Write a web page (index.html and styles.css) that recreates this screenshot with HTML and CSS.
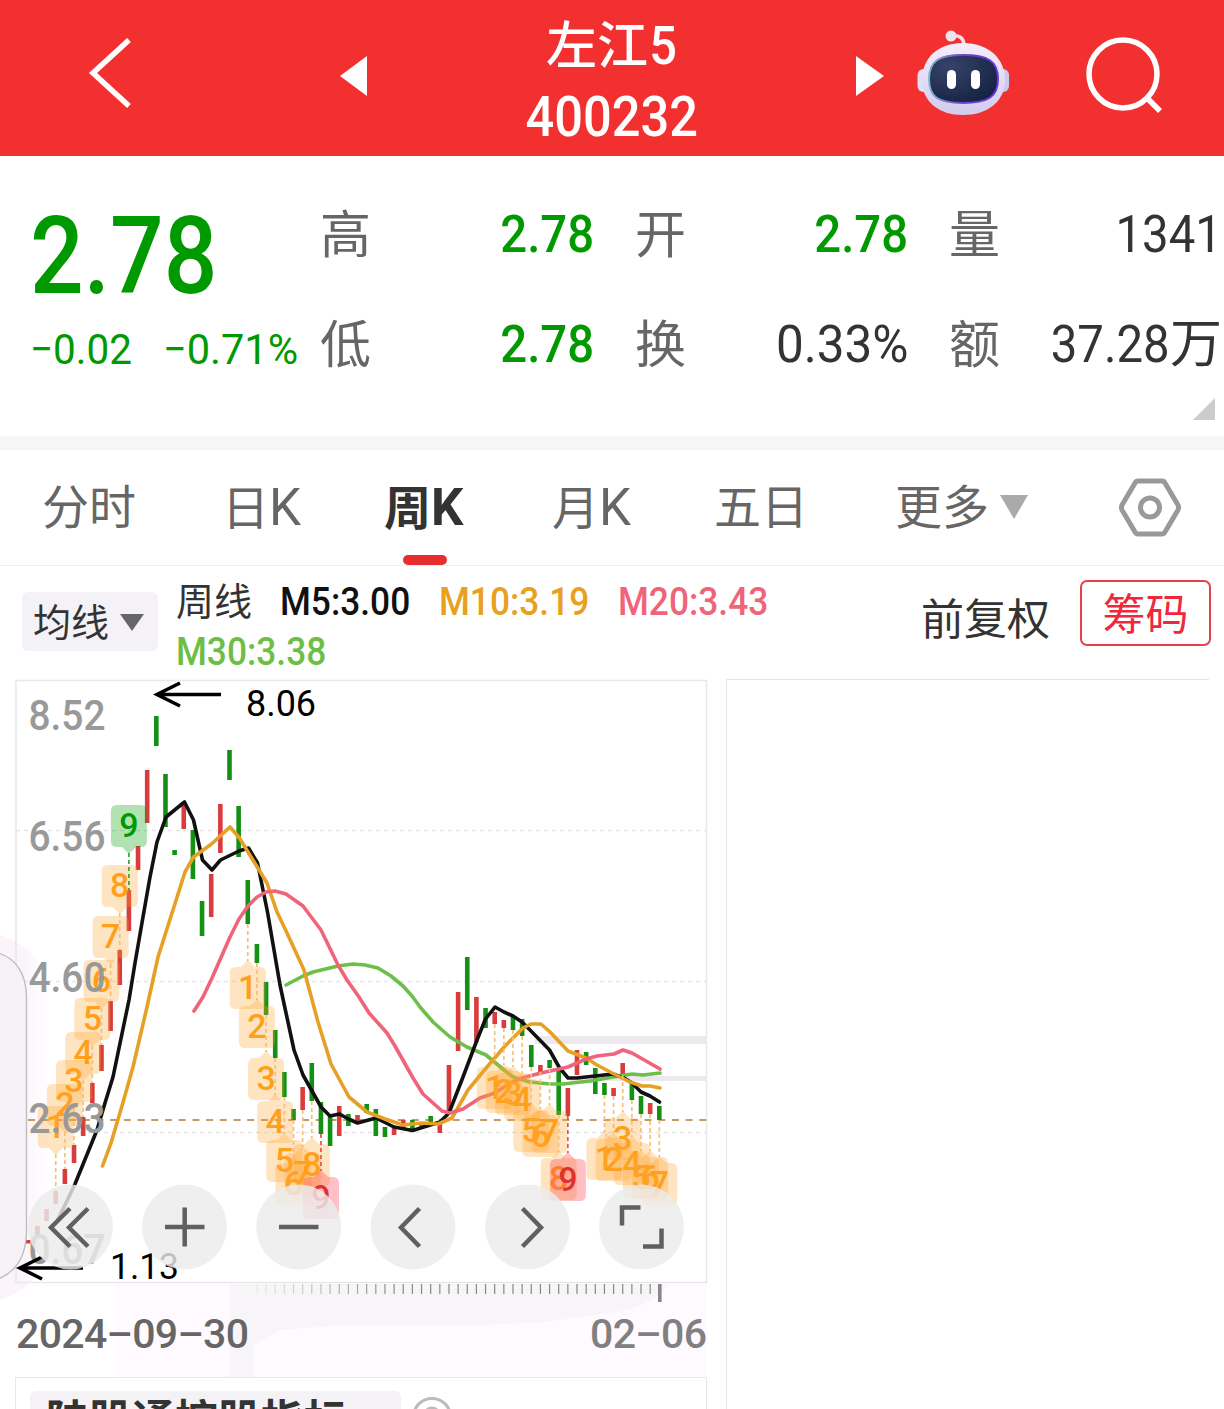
FILE: index.html
```html
<!DOCTYPE html>
<html lang="zh-CN">
<head>
	<meta charset="UTF-8">
	<meta name="viewport" content="width=device-width" />
	<title>左江5 400232</title>
	<link rel="stylesheet" href="styles.css">
	<script src="chart.js"></script>
</head>
<body>

<div class="header">
	<svg class="back" width="60" height="90" viewBox="80 28 60 90"><path d="M129 40 L93 73 L129 106" /></svg>
	<svg class="prev" width="28" height="42" viewBox="0 0 28 42"><path d="M0 21 L27 1 V41 Z" /></svg>
	<div class="title">
		<p class="name">左江<span>5</span></p>
		<p class="code"><span>400232</span></p>
	</div>
	<svg class="next" width="28" height="42" viewBox="0 0 28 42"><path d="M28 21 L0 1 V41 Z" /></svg>
	<svg class="robot" width="96" height="90" viewBox="915 28 96 90">
		<defs>
			<linearGradient id="head" x1="0" y1="0" x2="0" y2="1"><stop offset="0" stop-color="#f4eefb" /><stop offset="1" stop-color="#d3cbee" /></linearGradient>
			<linearGradient id="rim" x1="0" y1="0" x2="1" y2="0"><stop offset="0" stop-color="#7fb5cf" /><stop offset="0.5" stop-color="#6c43c4" /><stop offset="1" stop-color="#6a35e0" /></linearGradient>
			<radialGradient id="face" cx="0.3" cy="0.25" r="0.8"><stop offset="0" stop-color="#36446a" /><stop offset="1" stop-color="#172344" /></radialGradient>
		</defs>
		<path d="M951 36 Q964 34 964 46" fill="none" stroke="#e9dff3" stroke-width="3.500" />
		<circle cx="951" cy="36" r="5.500" fill="#f0e3ee" />
		<rect x="917.500" y="69" width="14" height="23" rx="6" fill="#e3def5" />
		<rect x="995" y="69" width="14" height="23" rx="6" fill="#cfc8ee" />
		<path d="M963 43 C988 43 1005 58 1005 80 C1005 102 987 115 963 115 C939 115 922 102 922 80 C922 58 938 43 963 43 Z" fill="url(#head)" />
		<path d="M963 55 C988 55 998 61 998 79 C998 97 988 103 963 103 C938 103 929 97 929 79 C929 61 939 55 963 55 Z" fill="url(#face)" stroke="url(#rim)" stroke-width="2" />
		<rect x="947" y="70" width="9" height="19" rx="4.500" fill="#fff" />
		<rect x="971" y="70" width="9" height="19" rx="4.500" fill="#fff" />
	</svg>
	<svg class="search" width="80" height="80" viewBox="1084 36 80 80"><circle cx="1123" cy="74" r="34" /><path d="M1147 98 L1160 111" /></svg>
</div>

<div class="quote">
	<div class="price">
		<p class="now"><span>2.78</span></p>
		<p class="change"><span>−0.02</span><span>−0.71%</span></p>
	</div>
	<dl><dt>高</dt><dd class="down"><span>2.78</span></dd></dl>
	<dl><dt>开</dt><dd class="down"><span>2.78</span></dd></dl>
	<dl><dt>量</dt><dd><span>1341</span></dd></dl>
	<dl><dt>低</dt><dd class="down"><span>2.78</span></dd></dl>
	<dl><dt>换</dt><dd><span class="rate">0.33%</span></dd></dl>
	<dl><dt>额</dt><dd><span>37.28</span>万</dd></dl>
	<i class="corner"></i>
</div>

<ul class="tabs">
	<li>分时</li>
	<li>日<em>K</em></li>
	<li class="on">周<em>K</em></li>
	<li>月<em>K</em></li>
	<li>五日</li>
	<li>更多<i class="arrow"></i></li>
	<li class="set"><svg width="64" height="60" viewBox="0 0 64 60"><path d="M20 3 H44 Q46 3 47 5 L60 27 Q61 29.500 60 32 L47 54 Q46 56 44 56 H20 Q18 56 17 54 L4 32 Q3 29.500 4 27 L17 5 Q18 3 20 3 Z" /><circle cx="32" cy="29.500" r="9.500" /></svg></li>
</ul>

<div class="legend">
	<div class="pick">均线<i class="arrow"></i></div>
	<div class="ma">
		<b>周线</b><span class="m5">M5:3.00</span><span class="m10">M10:3.19</span><span class="m20">M20:3.43</span><span class="m30">M30:3.38</span>
	</div>
	<div class="right">前复权</div>
	<div class="chip">筹码</div>
</div>

<div class="main">
	<div class="left">
		<svg id="chart" width="724" height="704" viewBox="0 673 724 704">
			<defs>
				<linearGradient id="fade" gradientUnits="userSpaceOnUse" x1="240" y1="0" x2="400" y2="0"><stop offset="0" stop-color="#888" stop-opacity="0" /><stop offset="1" stop-color="#888" /></linearGradient>
				<linearGradient id="glow" x1="0" y1="0" x2="1" y2="0"><stop offset="0.5" stop-color="#fbf5fb" /><stop offset="1" stop-color="#fffdff" /></linearGradient>
			</defs>
			<path d="M0 935 Q48 950 48 1000 V1240 Q46 1285 0 1300 Z" fill="url(#glow)" />
			<rect x="116" y="1284" width="591" height="93" fill="#fefaff" />
			<path d="M230 1284 H668 Q650 1310 600 1314 L545 1322 L480 1325 H345 L280 1330 L254 1345 V1377 H230 Z" fill="#f7f5f8" />
			<rect class="frame" x="16" y="680.500" width="690.500" height="602" />
			<path class="grid" d="M16 830.500 H706 M16 981.500 H706 M16 1132.500 H706" />
			<path d="M535 1036 H707 V1044 H535 Z M570 1076 H707 V1081 H570 Z" fill="#ede8ed" />
			<path class="last" d="M28 1120 H707" />
			<g id="candles"></g>
			<polyline class="l30" points="286,985 303,976 313,972 338,966 353,964 365,965 378,968 391,976 403,986 412,996 420,1007 433,1022 450,1037 467,1047 486,1055 504,1070 513,1077 530,1082 550,1084 563,1084 590,1081 613,1077 632,1074 643,1075 660,1073" />
			<polyline class="l5" points="58,1219 66,1203 75,1184 97,1130 105,1103 113,1077 129,1000 135,963 143,917 150,877 157,842 166,817 184.500,802 193.500,820 202.500,860 212,870 220.500,860 239,851 248.500,848 257.500,863 267.500,912 280,985 294,1050 303,1075 312,1091 321,1107 330,1116 339.500,1114 348.500,1119 357.500,1123 376,1118 394,1127 412.500,1130.500 440,1122 449,1113 463,1077 477,1040 485.500,1019 495,1007 504,1012 513,1016 522,1022 531,1031 549.500,1050 559,1067 568,1078 577,1078 613,1074 624,1078 632,1083 641,1092 650,1096 659.500,1102" />
			<polyline class="l10" points="102.500,1166 111,1143 122,1106 133,1067 147,1007 158,957 173,910 185,872 193.500,857 211.500,844 230,827 239.500,838 248,852 267,883 277,912 287,933 304,970 318,1022 331,1064 349,1097 367,1112 385,1119 403,1125 422,1123 438,1124 452,1118 468,1090 487,1067 505,1046 523,1028 531,1024 541,1024 550,1032 568,1051 586,1058 597,1065 614,1074 630,1082 642,1086 650,1086 660,1088" />
			<polyline class="l20" points="194,1011 203,997 212,978 230,937 239,919 248,906 257,897 266,892 275,891 286,894 303,906 321,930 338,965 347,980 359,997 369,1013 387,1033 395,1046 413,1078 423,1094 442,1111 450,1113 463,1109 480,1098 495,1093 510,1083 522,1078 541,1073 568,1067 586,1059 597,1056 614,1054 623,1050 632,1053 660,1069" />
			<g id="marks"></g>
			<g class="axis">
				<text x="28.500" y="730" textLength="77" lengthAdjust="spacingAndGlyphs">8.52</text>
				<text x="28.500" y="851" textLength="77" lengthAdjust="spacingAndGlyphs">6.56</text>
				<text x="28.500" y="992" textLength="77" lengthAdjust="spacingAndGlyphs">4.60</text>
				<text x="28.500" y="1133" textLength="77" lengthAdjust="spacingAndGlyphs">2.63</text>
				<text x="28.500" y="1264" textLength="77" lengthAdjust="spacingAndGlyphs">0.67</text>
			</g>
			<path class="point" d="M221 694.500 H157 M180 683 L157 694.500 L180 706 M83 1268 H20 M42 1257 L20 1268 L42 1279" />
			<text class="peak" x="246" y="716" textLength="70" lengthAdjust="spacingAndGlyphs">8.06</text>
			<text class="peak" x="110" y="1279" textLength="69" lengthAdjust="spacingAndGlyphs">1.13</text>
			<path class="drawer" d="M-2 953 C16 958 26 974 26.500 996 V1232 C26 1256 16 1272 -2 1279 Z" />
			<g class="btn">
				<circle cx="70.500" cy="1227" r="42.500" /><circle cx="184.500" cy="1227" r="42.500" /><circle cx="298.700" cy="1227" r="42.500" />
				<circle cx="413" cy="1227" r="42.500" /><circle cx="527.500" cy="1227" r="42.500" /><circle cx="641.500" cy="1227" r="42.500" />
			</g>
			<path class="ico" d="M70 1208.500 L51 1227.500 L70 1246.500 M88 1208.500 L69 1227.500 L88 1246.500 M165 1227 H204.500 M184.700 1207.500 V1246.500 M279 1227 H318.500 M419.500 1208.500 L401 1227.500 L419.500 1246.500 M522.500 1208.500 L541 1227.500 L522.500 1246.500 M622 1225.500 V1207.500 H640.500 M643 1246.500 H661.500 V1228.500" />
			<g id="ticks"></g>
			<text class="date" x="16" y="1348" textLength="233">2024–09–30</text>
			<text class="date end" x="590" y="1348" textLength="117">02–06</text>
		</svg>
		<div class="panel">
			<div class="tag">陆股通控股指标</div>
			<svg width="40" height="40" viewBox="0 0 40 40"><circle cx="20" cy="20" r="18.500" /><path d="M14 17 Q14 11 20 11 Q26 11 26 17 Q26 20 20 23" /></svg>
		</div>
	</div>
	<div class="chips"></div>
</div>

</body>
</html>
```
FILE: chart.js
```js
window.onload = function(){

	var oCandles = document.getElementById('candles');
	var oMarks = document.getElementById('marks');
	var oTicks = document.getElementById('ticks');

	// top, bottom, 1 = up
	var data = [
		[1240,1243.5,1],[1226,1235,1],[1209,1221,1],[1191,1204,1],[1169,1184,1],[1145,1163,1],[1117,1136,1],
		[1083,1103,1],[1045,1071,1],[1001,1031,1],[950,985,1],[890,931,1],[846,870,1],[770,823,1],
		[716,746,0],[774,827,0],[850,855,0],[803,829,1],[830,879,0],[901,936,0],[874,917,1],
		[804,853,1],[750,780,0],[806,857,0],[880,924,0],[944,963,0],[982,1015,0],[1030,1058,0],
		[1072,1097,0],[1109,1120,0],[1087,1110,1],[1063,1101,0],[1102,1134,0],[1115,1146,0],[1106,1136,1],
		[1114,1126,0],[1115,1123,1],[1104,1113,0],[1109,1136,0],[1127,1137,0],[1127,1135,1],[1120,1130,1],
		[1120,1132,0],[1123,1127,1],[1116,1123,0],[1124,1133,1],[1065,1113,1],[992,1051,1],[957,1010,0],
		[997,1042,1],[1008,1028,0],[1012,1024,1],[1020,1028,1],[1017,1030,0],[1019,1036,0],[1045,1067,0],
		[1065,1072,1],[1060,1068,0],[1068,1115,0],[1088,1116,1],[1050,1075,1],[1052,1065,0],[1068,1094,0],
		[1083,1095,0],[1088,1096,1],[1063,1075,1],[1084,1100,0],[1096,1114,0],[1103,1114,1],[1106,1120,0]
	];

	function getX(i){
		return 28.3 + i*9.145;
	}

	function add(parent,name,attr,text){
		var el = document.createElementNS('http://www.w3.org/2000/svg',name);
		for(var k in attr){
			el.setAttribute(k,attr[k]);
		}
		if(text){
			el.textContent = text;
		}
		parent.appendChild(el);
	}

	for(var i=0;i<data.length;i++){
		add(oCandles,'rect',{'class':data[i][2] ? 'up' : 'dn', x:getX(i)-2.3, y:data[i][0], width:4.6, height:data[i][1]-data[i][0]});
	}

	// count marks above (dir -1) or below (dir 1) the candles
	function mark(start,count,dir){
		for(var n=1;n<=count;n++){
			var i = start + n - 1;
			var x = getX(i);
			var top = dir<0 ? data[i][0]-85 : data[i][1]+43;
			var from = dir<0 ? top+48 : data[i][1];
			var to = dir<0 ? data[i][0] : top-6;
			var c = n==9 ? (dir<0 ? 'mark low' : 'mark high') : 'mark';
			var box = 'M'+(x-12)+' '+top;
			if(dir>0){
				box += 'H'+(x-7)+'L'+x+' '+(top-7)+'L'+(x+7)+' '+top;
			}
			box += 'H'+(x+12)+'q6 0 6 6v30q0 6 -6 6';
			if(dir<0){
				box += 'H'+(x+7)+'L'+x+' '+(top+49)+'L'+(x-7)+' '+(top+42);
			}
			box += 'H'+(x-12)+'q-6 0 -6 -6v-30q0 -6 6 -6Z';
			add(oMarks,'path',{'class':c+' stem', d:'M'+x+' '+from+'V'+to});
			add(oMarks,'path',{'class':c+' box', d:box});
			add(oMarks,'text',{'class':c, x:x, y:top+31.5}, String(n));
		}
	}
	mark(3,9,-1);
	mark(24,9,1);
	mark(51,9,1);
	mark(63,7,1);

	for(var i=25;i<69;i++){
		add(oTicks,'rect',{x:getX(i)-0.6, y:1284, width:1.2, height:10, fill:'url(#fade)'});
	}
	add(oTicks,'rect',{x:658, y:1284, width:3.6, height:18, fill:'#888'});

}
```
FILE: styles.css
```css
*{padding:0; margin:0; box-sizing:border-box;}
body{width:1224px; height:1409px; overflow:hidden; background:#fff; color:#333; font-family:Roboto,"Noto Sans CJK SC",sans-serif;}
ul{list-style:none;}
i{display:inline-block;}
em{font-style:normal; font-size:51px;}
svg{display:block; flex:none;}

.header{display:flex; height:156px; padding-left:80px; background:#f23030; color:#fff;}
.header svg{fill:#fff;}
.header .back{margin-top:28px; fill:none; stroke:#fff; stroke-width:5.5;}
.header .prev{margin:55px 0 0 200px;}
.title{width:488px; text-align:center; font-weight:500;}
.title .name{padding-top:10px; font-size:51px; line-height:72px; height:81px;}
.title .name span{display:inline-block; font-size:53px; transform:scaleX(.92);}
.title .code{font-size:55px; line-height:72px;}
.title .code span{display:inline-block; transform:scaleX(.92);}
.header .next{margin-top:55px;}
.header .robot{margin:28px 0 0 31px;}
.header .search{margin:36px 0 0 73px; fill:none; stroke:#fff; stroke-width:5.5;}

.quote{position:relative; display:grid; grid-template-columns:320px 274px 314px 314px; grid-template-rows:110px 110px; height:294px; padding-top:24px; border-bottom:14px solid #f6f6f6;}
.price{grid-row:1 / 3; padding-left:30px; color:#090;}
.price .now{font-size:108px; font-weight:500; line-height:108px; padding-top:22px; white-space:nowrap;}
.price .now span{display:inline-block; transform:scaleX(.875); transform-origin:0 50%;}
.price .change{display:flex; margin-top:14px; font-size:43px; line-height:50px;}
.price .change span{width:133px; white-space:nowrap; transform:scaleX(.94); transform-origin:0 50%;}
.price .change span:last-child{transform:scaleX(.965);}
.quote dl{display:flex; justify-content:space-between; height:110px; line-height:110px; font-size:51px; white-space:nowrap;}
.quote dl:nth-of-type(3n+2),.quote dl:nth-of-type(3n){padding-left:41px;}
.quote dt{color:#666; padding-top:1px;}
.quote dd{font-size:52px;}
.quote dd span{display:inline-block; transform:scaleX(.91); transform-origin:100% 50%;}
.quote dd .rate{transform:scaleX(.95);}
.quote .down{color:#090; font-weight:500;}
.corner{position:absolute; right:9px; bottom:16px; border-left:22px solid transparent; border-bottom:22px solid #ccc;}

.tabs{display:flex; position:relative; height:116px; border-bottom:1px solid #eee; line-height:116px; font-size:47px; color:#666; white-space:nowrap;}
.tabs li{position:relative; flex:none; width:164px; height:115px;}
.tabs li:first-child{width:182px; padding-left:42px;}
.tabs li:nth-child(2){padding-left:40px;}
.tabs li:nth-child(3){padding-left:38px;}
.tabs li:nth-child(4){padding-left:42px;}
.tabs li:nth-child(5){width:180px; padding-left:40px;}
.tabs li:nth-child(6){width:222px; padding-left:41px;}
.tabs .on{color:#333; font-weight:700;}
.tabs .on:after{content:""; position:absolute; left:57px; bottom:0; width:44px; height:10px; border-radius:5px; background:#e62e2e;}
.arrow{border:14px solid transparent; border-top:24px solid #aaa; border-bottom:0; margin-left:11px; vertical-align:5px;}
.tabs .set{width:148px; padding:28px 0 0 42px;}
.tabs svg{fill:none; stroke:#999; stroke-width:5;}

.legend{display:flex; height:107px; white-space:nowrap;}
.pick{width:136px; height:59px; margin:26px 0 0 22px; padding-left:11px; border-radius:6px; background:#f5f2f7; font-size:38px; line-height:62px;}
.pick .arrow{border-width:17px 12px 0; border-top-color:#666; margin-left:11px; vertical-align:5px;}
.ma{width:680px; height:100px; margin:11px 0 0 18px; font-size:39px; line-height:50px; display:flex; flex-wrap:wrap; align-content:flex-start;}
.ma b{width:104px; font-size:38px; font-weight:400;}
.ma span{font-weight:500; transform:scaleX(.905); transform-origin:0 50%;}
.ma .m5{width:159px; color:#111;}
.ma .m10{width:179px; color:#e8a020;}
.ma .m20{width:200px; color:#f0647a;}
.ma .m30{color:#6cbf44;}
.legend .right{width:159px; margin:24px 0 0 65px; font-size:43px; line-height:60px;}
.chip{width:131px; height:66px; margin-top:14px; border:2px solid #e6404c; border-radius:7px; color:#f0283c; text-align:center; font-size:43px; line-height:66px;}

.main{display:flex; height:736px;}
.left{width:726px;}
.chips{width:483px; height:730px; margin-top:6px; border-top:1px solid #e5e5e5; border-left:1px solid #e5e5e5;}
.frame{fill:none; stroke:#e8e8e8; stroke-width:1.5;}
.grid{fill:none; stroke:#e6e6e6; stroke-width:1.3; stroke-dasharray:4 4;}
.last{stroke:#c39a68; stroke-width:2; stroke-dasharray:7 6.7;}
.up{fill:#d93c3c;}
.dn{fill:#149114;}
polyline{fill:none; stroke-width:3.6; stroke-linejoin:round; stroke-linecap:round;}
.l5{stroke:#111;}
.l10{stroke:#e5a025;}
.l20{stroke:#f0647a;}
.l30{stroke:#6cc04a;}
.mark{fill:#ff9f1a; font-size:34px; font-weight:500; text-anchor:middle;}
.mark.low{fill:#090;}
.mark.high{fill:#e03030;}
.mark.box{fill:#ffa733; fill-opacity:.3;}
.mark.box.low{fill:#00a000;}
.mark.box.high{fill:#ff3c50; fill-opacity:.33;}
.stem{stroke:#f6c078; stroke-width:1.7; stroke-dasharray:4 3;}
.stem.low{stroke:#3a3;}
.stem.high{stroke:#d55;}
.axis{fill:#999; font-size:42px; font-weight:500;}
.point{fill:none; stroke:#000; stroke-width:3.6;}
.peak{fill:#000; font-size:37px;}
.drawer{fill:#f5f1f6; stroke:#bbb; stroke-width:1.3;}
.btn{fill:#ebebeb; fill-opacity:.82;}
.ico{fill:none; stroke:#606060; stroke-width:4.5;}
.date{fill:#666; font-size:41px; font-weight:500;}
.end{fill:#808080;}
.panel{display:flex; width:692px; height:60px; margin-left:15px; border:1px solid #e8e8e8; overflow:hidden;}
.tag{width:371px; height:60px; margin:13px 0 0 14px; padding-left:16px; border-radius:6px; background:#f5f2f6; font-size:43px; font-weight:700; line-height:60px; white-space:nowrap;}
.panel svg{margin:19px 0 0 11px; fill:none; stroke:#bbb; stroke-width:3;}
```
